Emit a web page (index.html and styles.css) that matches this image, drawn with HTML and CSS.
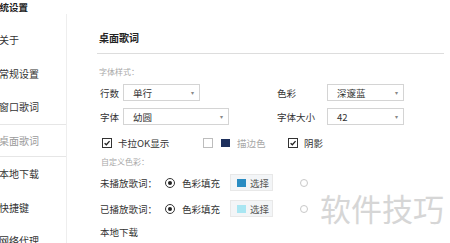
FILE: index.html
```html
<!DOCTYPE html>
<html lang="zh-CN">
<head>
<meta charset="utf-8">
<title>系统设置</title>
<link rel="stylesheet" href="styles.css">
</head>
<body>
<div class="window">
  <div class="titlebar">系统设置</div>
  <div class="body">
    <nav class="sidebar">
      <div class="nav-item">关于</div>
      <div class="nav-item">常规设置</div>
      <div class="nav-item">窗口歌词</div>
      <div class="nav-item active">桌面歌词</div>
      <div class="nav-item">本地下载</div>
      <div class="nav-item">快捷键</div>
      <div class="nav-item">网络代理</div>
    </nav>
    <main class="content">
      <div class="panel-head">桌面歌词</div>
      <div class="section-label first">字体样式：</div>
      <div class="form-row">
        <div class="field left">
          <span class="field-label">行数</span>
          <div class="select w-short"><span>单行</span><span class="caret">▾</span></div>
        </div>
        <div class="field">
          <span class="field-label wide">色彩</span>
          <div class="select w-short"><span>深邃蓝</span><span class="caret">▾</span></div>
        </div>
      </div>
      <div class="form-row second">
        <div class="field left">
          <span class="field-label">字体</span>
          <div class="select w-long"><span>幼圆</span><span class="caret">▾</span></div>
        </div>
        <div class="field">
          <span class="field-label wide">字体大小</span>
          <div class="select w-short"><span>42</span><span class="caret">▾</span></div>
        </div>
      </div>
      <div class="check-row">
        <div class="check-group g1">
          <span class="checkbox checked"><svg viewBox="0 0 10 10" width="10" height="10"><path d="M2 5.2 L4.2 7.2 L8.2 2.6" fill="none" stroke="#222" stroke-width="1.6"/></svg></span>
          <span>卡拉OK显示</span>
        </div>
        <div class="check-group g2">
          <span class="checkbox"></span>
          <span class="swatch navy"></span>
          <span class="muted">描边色</span>
        </div>
        <div class="check-group">
          <span class="checkbox checked"><svg viewBox="0 0 10 10" width="10" height="10"><path d="M2 5.2 L4.2 7.2 L8.2 2.6" fill="none" stroke="#222" stroke-width="1.6"/></svg></span>
          <span>阴影</span>
        </div>
      </div>
      <div class="section-label second">自定义色彩：</div>
      <div class="radio-row">
        <span class="radio-label">未播放歌词：</span>
        <span class="radio on"></span>
        <span class="radio-text">色彩填充</span>
        <span class="pick-btn"><span class="swatch blue"></span>选择</span>
        <span class="radio off"></span>
      </div>
      <div class="radio-row next">
        <span class="radio-label">已播放歌词：</span>
        <span class="radio on"></span>
        <span class="radio-text">色彩填充</span>
        <span class="pick-btn"><span class="swatch cyan"></span>选择</span>
        <span class="radio off"></span>
      </div>
      <div class="sub-head">本地下载</div>
    </main>
  </div>
  <div class="watermark">软件技巧</div>
</div>
</body>
</html>
```

FILE: styles.css
```css
* { box-sizing: border-box; }

html, body {
  margin: 0;
  padding: 0;
  background: #fff;
}

body {
  width: 450px;
  height: 243px;
  overflow: hidden;
  font-family: "Noto Sans CJK SC", "Noto Sans", sans-serif;
  color: #333;
  font-size: 9.5px;
}

.window {
  position: relative;
  width: 450px;
  height: 243px;
  overflow: hidden;
}

.titlebar {
  height: 14px;
  line-height: 14px;
  font-size: 9.5px;
  font-weight: bold;
  color: #222;
  margin-left: -10px;
}

.body {
  display: flex;
  height: 229px;
}

.sidebar {
  width: 67px;
  flex: none;
  border-right: 1px solid #eeeeee;
  padding-top: 9px;
}

.nav-item {
  height: 33.5px;
  line-height: 33.5px;
  font-size: 10px;
  color: #333;
  margin-left: -1px;
  white-space: nowrap;
}

.nav-item.active {
  color: #9a9a9a;
  border-top: 1px solid #e6e6e6;
  border-bottom: 1px solid #e6e6e6;
  line-height: 31.5px;
}

.content {
  flex: 1;
  padding: 0 6px 0 30px;
}

.panel-head {
  padding: 17px 0 8px 2px;
  line-height: 14px;
  font-size: 10px;
  font-weight: bold;
  color: #222;
  border-bottom: 1px solid #dddddd;
}

.section-label {
  line-height: 12px;
  font-size: 8px;
  color: #a8a8a8;
  padding-left: 2px;
}
.section-label.first { margin-top: 12px; }
.section-label.second { margin-top: 6px; padding-left: 4px; }

.form-row {
  display: flex;
  margin-top: 6px;
  height: 17px;
  padding-left: 3px;
}
.form-row.second { margin-top: 7px; }

.field {
  display: flex;
  align-items: center;
}
.field.left { width: 177px; }

.field-label {
  width: 23px;
  flex: none;
}
.field-label.wide { width: 50px; }

.select {
  height: 17px;
  border: 1px solid #d4d4d4;
  display: flex;
  align-items: center;
  justify-content: space-between;
  padding: 0 5px 0 9px;
  background: #fff;
}
.w-short { width: 77px; }
.w-long { width: 106px; }

.caret {
  font-size: 6px;
  color: #888;
}

.check-row {
  display: flex;
  align-items: center;
  height: 14px;
  margin-top: 11px;
  padding-left: 5px;
}

.check-group {
  display: flex;
  align-items: center;
  gap: 6px;
}
.check-group.g1 { width: 101px; }
.check-group.g2 { width: 85px; gap: 7px; }

.checkbox {
  width: 10px;
  height: 10px;
  border: 1px solid #bdbdbd;
  background: #fff;
  display: inline-flex;
  align-items: center;
  justify-content: center;
}
.checkbox.checked { border-color: #333; }
.checkbox svg { display: block; }

.swatch {
  display: inline-block;
  width: 9px;
  height: 8px;
}
.swatch.navy { background: #1d2f5c; margin-left: 1px; }
.swatch.blue { background: #2a8cc2; }
.swatch.cyan { background: #a9e6f2; }

.muted { color: #a8a8a8; }

.radio-row {
  display: flex;
  align-items: center;
  height: 17px;
  margin-top: 6px;
  padding-left: 3px;
}
.radio-row.next { margin-top: 9px; }

.radio-label { width: 65px; flex: none; }

.radio {
  width: 10px;
  height: 10px;
  border-radius: 50%;
  border: 1px solid #333;
  flex: none;
  position: relative;
}
.radio.on::after {
  content: "";
  position: absolute;
  left: 2px;
  top: 2px;
  width: 4px;
  height: 4px;
  border-radius: 50%;
  background: #222;
}
.radio.off {
  border-color: #c8c8c8;
  width: 8px;
  height: 8px;
  margin-left: 27px;
}

.radio-text { margin-left: 7px; width: 48px; }

.pick-btn {
  display: flex;
  align-items: center;
  gap: 4px;
  height: 17px;
  width: 43px;
  padding-left: 6px;
  background: #f3f5f7;
  border: 1px solid #e8e8e8;
  color: #555;
}

.sub-head {
  margin-top: 8px;
  line-height: 14px;
  padding-left: 3px;
  color: #333;
}

.watermark {
  position: absolute;
  left: 320px;
  top: 188px;
  font-size: 31px;
  line-height: 40px;
  color: #d6d6d6;
  letter-spacing: 0;
  white-space: nowrap;
}
```
